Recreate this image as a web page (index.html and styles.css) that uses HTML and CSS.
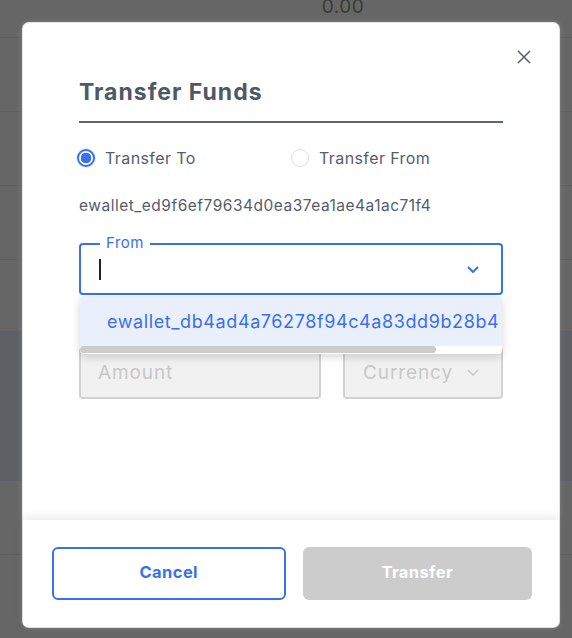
FILE: index.html
```html
<!DOCTYPE html>
<html lang="en">
<head>
<meta charset="utf-8">
<title>Transfer Funds</title>
<link rel="stylesheet" href="styles.css">
</head>
<body>
<div class="page">
  <div class="row row-top"><span class="balance">0.00</span></div>
  <div class="row"></div>
  <div class="row"></div>
  <div class="row"></div>
  <div class="row row-short"></div>
  <div class="row row-hl"></div>
  <div class="row"></div>
  <div class="row row-last"></div>
</div>

<div class="modal" role="dialog" aria-labelledby="modal-title">
  <button class="close" aria-label="Close">
    <svg viewBox="0 0 14 14" width="14" height="14"><path d="M1 1L13 13M13 1L1 13" stroke="#555d6a" stroke-width="1.5" fill="none"/></svg>
  </button>
  <div class="modal-body">
    <h2 class="title" id="modal-title">Transfer Funds</h2>
    <div class="radios">
      <label class="radio is-checked"><span class="radio-dot"></span>Transfer To</label>
      <label class="radio"><span class="radio-dot"></span>Transfer From</label>
    </div>
    <div class="wallet">ewallet_ed9f6ef79634d0ea37ea1ae4a1ac71f4</div>
    <div class="field-wrap">
      <div class="field is-focused">
        <span class="field-label">From</span>
        <span class="caret"></span>
        <svg class="chevron" viewBox="0 0 12 7" width="12" height="7"><path d="M1 1L6 6L11 1" stroke="#3a6ff0" stroke-width="2" fill="none"/></svg>
      </div>
      <div class="menu">
        <div class="menu-scroll">
          <div class="option">ewallet_db4ad4a76278f94c4a83dd9b28b4</div>
        </div>
        <div class="menu-bar"><span class="menu-thumb"></span></div>
      </div>
    </div>
    <div class="pair">
      <div class="input is-disabled">Amount</div>
      <div class="input is-disabled select">Currency
        <svg class="chevron" viewBox="0 0 12 7" width="12" height="7"><path d="M1 1L6 6L11 1" stroke="#c9c9c9" stroke-width="1.6" fill="none"/></svg>
      </div>
    </div>
  </div>
  <div class="modal-footer">
    <button class="btn btn-outline">Cancel</button>
    <button class="btn btn-disabled">Transfer</button>
  </div>
</div>
</body>
</html>
```

FILE: styles.css
```css
* { box-sizing: border-box; }
html, body { margin: 0; padding: 0; }
body {
  width: 572px;
  height: 638px;
  overflow: hidden;
  background: #666666;
  font-family: "Inter", "Open Sans", sans-serif;
  position: relative;
}

/* dimmed page behind */
.page { display: flex; flex-direction: column; }
.row { height: 74px; border-bottom: 1px solid #5f5f5f; }
.row-top { height: 38px; display: flex; justify-content: center; padding-left: 114px; }
.row-short { height: 72px; }
.row-hl { height: 149px; background: #5d6166; border-bottom: none; }
.row-last { height: 85px; border-bottom: none; }
.balance {
  display: block;
  margin-top: -5px;
  font-size: 19px;
  line-height: 24px;
  color: #3a3a3a;
  letter-spacing: 0.5px;
}

/* modal */
.modal {
  position: absolute;
  left: 23px;
  top: 23px;
  width: 536px;
  height: 604px;
  background: #fff;
  border-radius: 6px;
  box-shadow: 0 0 0 1px #e4e4e4, 0 0 6px rgba(255,255,255,0.25);
  display: flex;
  flex-direction: column;
}
.close {
  position: absolute;
  right: 28px;
  top: 27px;
  width: 14px;
  height: 14px;
  padding: 0;
  border: 0;
  background: none;
  display: flex;
}
.modal-body {
  flex: 1;
  padding: 55px 56px 0;
  color: #555d6a;
}
.title {
  margin: 0;
  font-size: 23px;
  line-height: 28px;
  font-weight: 700;
  color: #4f5866;
  letter-spacing: 1px;
  padding-bottom: 15px;
  border-bottom: 2px solid #5f6673;
}
.radios {
  display: grid;
  grid-template-columns: 214px 1fr;
  margin: 23px 0 0 -2px;
}
.radio {
  display: flex;
  align-items: center;
  gap: 10px;
  height: 24px;
  font-size: 16px;
  letter-spacing: 0.4px;
  color: #555d6a;
}
.radio-dot {
  width: 18px;
  height: 18px;
  border-radius: 50%;
  border: 1px solid #e0e0e0;
  flex: none;
}
.radio.is-checked .radio-dot {
  border: 2px solid #3a6ff0;
  background: radial-gradient(circle, #3a6ff0 0 5px, #fff 5.6px);
  box-shadow: 0 0 0 1px rgba(58,111,240,0.15);
}
.wallet {
  margin-top: 24px;
  font-size: 15.5px;
  line-height: 24px;
  letter-spacing: 0.5px;
  color: #555d6a;
}

/* From select */
.field-wrap { position: relative; margin-top: 25px; }
.field {
  position: relative;
  height: 52px;
  border: 2px solid #3a6ff0;
  border-radius: 4px;
  display: flex;
  align-items: center;
  padding: 0 22px 0 18px;
}
.field-label {
  position: absolute;
  left: 19px;
  top: -11px;
  padding: 0 6px;
  background: #fff;
  font-size: 15px;
  line-height: 18px;
  letter-spacing: 0.5px;
  color: #3a6ff0;
}
.caret { width: 2px; height: 21px; background: #222; }
.chevron { margin-left: auto; flex: none; }
.menu {
  position: absolute;
  left: 1px;
  right: 1px;
  top: 53px;
  height: 58px;
  background: #fff;
  border-radius: 4px;
  box-shadow: 0 3px 10px rgba(0,0,0,0.16);
  overflow: hidden;
  z-index: 2;
}
.menu-scroll { overflow: hidden; }
.option {
  height: 50px;
  display: flex;
  align-items: center;
  padding-left: 27px;
  background: #e9f0fc;
  white-space: nowrap;
  font-size: 18px;
  letter-spacing: 0.6px;
  color: #3a6ff0;
}
.menu-bar { height: 8px; }
.menu-thumb {
  display: block;
  width: 356px;
  height: 7px;
  border-radius: 4px;
  background: #cccccc;
}

.pair {
  display: grid;
  grid-template-columns: 242px 1fr;
  gap: 22px;
  margin-top: 52px;
}
.input {
  height: 52px;
  border: 2px solid #d2d2d2;
  border-radius: 4px;
  background: #f1f1f1;
  display: flex;
  align-items: center;
  padding: 0 22px 2px 17px;
  font-size: 19px;
  letter-spacing: 0.9px;
  color: #c8c8c8;
}
.select { padding-left: 18px; }

/* footer */
.modal-footer {
  height: 107px;
  display: flex;
  align-items: center;
  gap: 17px;
  padding: 0 27px 0 29px;
  border-radius: 0 0 6px 6px;
  background: #fff;
  box-shadow: 0 -3px 10px rgba(0,0,0,0.09);
}
.btn {
  flex: 1;
  height: 53px;
  padding: 0 0 3px;
  border-radius: 6px;
  font-family: inherit;
  font-size: 16.5px;
  font-weight: 700;
  letter-spacing: 0.4px;
  cursor: pointer;
}
.btn-outline { background: #fff; border: 2px solid #3a6ff0; color: #3a6ff0; }
.btn-disabled { background: #cccccc; border: 0; color: #fff; }
```
